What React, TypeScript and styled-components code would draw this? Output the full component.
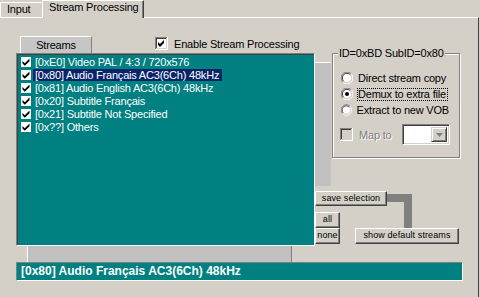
import React from 'react';
import styled, { createGlobalStyle } from 'styled-components';

const GlobalStyle = createGlobalStyle`
  html, body {
    margin: 0;
    padding: 0;
    background: #d4d0c8;
  }
  body {
    font-family: "Liberation Sans", Arial, sans-serif;
    font-size: 11px;
    letter-spacing: -0.2px;
    color: #000;
    width: 480px;
    height: 297px;
    overflow: hidden;
  }
`;

const Window = styled.div`
  width: 480px;
  height: 297px;
  background: #d4d0c8;
`;

const TabStrip = styled.div`
  display: flex;
  align-items: flex-end;
  height: 17px;
`;

const Tab = styled.div<{ $active?: boolean }>`
  box-sizing: border-box;
  position: relative;
  z-index: ${p => (p.$active ? 1 : 0)};
  height: ${p => (p.$active ? '18px' : '15px')};
  margin-bottom: ${p => (p.$active ? '-1px' : '0')};
  padding: 0 0 0 6px;
  line-height: 13px;
  background: #d4d0c8;
  border-top: 1px solid #fff;
  border-left: 1px solid #fff;
  border-right: ${p => (p.$active ? '1px solid #404040' : 'none')};
  box-shadow: ${p => (p.$active ? 'inset -1px 0 0 #808080' : 'none')};
  width: ${p => (p.$active ? '102px' : '42px')};
`;

const Panel = styled.div`
  box-sizing: border-box;
  width: 479px;
  height: 280px;
  border-top: 1px solid #fff;
  border-right: 1px solid #404040;
  padding: 18px 0 0 16px;
`;

const TopArea = styled.div`
  display: flex;
  align-items: flex-start;
`;

const LeftCol = styled.div`
  display: flex;
  flex-direction: column;
  width: 299px;
`;

const HeaderRow = styled.div`
  display: flex;
  align-items: flex-start;
  height: 17px;
`;

const StreamsHeader = styled.div`
  box-sizing: border-box;
  margin-left: 4px;
  width: 72px;
  height: 17px;
  background: #c6c6c6;
  border-top: 1px solid #fff;
  border-left: 1px solid #fff;
  border-right: 1px solid #808080;
  text-align: center;
  line-height: 16px;
`;

const CheckLabel = styled.label<{ $disabled?: boolean }>`
  display: flex;
  align-items: center;
  gap: 6px;
  color: ${p => (p.$disabled ? '#808080' : '#000')};
  text-shadow: ${p => (p.$disabled ? '1px 1px 0 #fff' : 'none')};
`;

const EnableWrap = styled.div`
  margin: 1px 0 0 63px;
`;

const StreamList = styled.div`
  box-sizing: border-box;
  height: 193px;
  background: #008080;
  border: 1px solid;
  border-color: #808080 #fff #fff #808080;
  box-shadow: inset 1px 1px 0 #404040;
  padding: 1px 0 0 4px;
`;

const Row = styled.div`
  display: flex;
  align-items: center;
  height: 13px;
`;

const RowText = styled.span<{ $selected?: boolean }>`
  margin-left: 2px;
  padding: 0 3px 0 2px;
  height: 12px;
  line-height: 12px;
  color: #fff;
  background: ${p => (p.$selected ? '#0a246a' : 'transparent')};
  white-space: nowrap;
`;

const RightCol = styled.div`
  display: flex;
  flex-direction: column;
`;

const RightTop = styled.div`
  display: flex;
  align-items: flex-start;
  height: 155px;
`;

const GrayStrip = styled.div`
  box-sizing: border-box;
  margin-top: 26px;
  width: 16px;
  height: 124px;
  background: #c0c0c0;
  border-top: 1px solid #fff;
`;

const GroupBox = styled.div`
  box-sizing: border-box;
  position: relative;
  margin: 17px 0 0 1px;
  width: 128px;
  height: 105px;
  border: 1px solid #808080;
  box-shadow: 1px 1px 0 #fff, inset 1px 1px 0 #fff;
  padding: 16px 9px 0 8px;
`;

const Legend = styled.span`
  position: absolute;
  top: -7px;
  left: 5px;
  padding: 0 1px;
  background: #d4d0c8;
  line-height: 13px;
`;

const RadioRow = styled.div`
  display: flex;
  align-items: center;
  height: 16px;
`;

const RadioText = styled.span<{ $focused?: boolean }>`
  margin-left: ${p => (p.$focused ? '4px' : '5px')};
  padding: 0 1px 0 0;
  line-height: 11px;
  border: ${p => (p.$focused ? '1px dotted #000' : 'none')};
  white-space: nowrap;
`;

const MapRow = styled.div`
  display: flex;
  align-items: center;
  height: 21px;
  margin: 6px 0 0 -1px;
`;

const Combo = styled.div`
  box-sizing: border-box;
  margin-left: auto;
  width: 48px;
  height: 21px;
  display: flex;
  justify-content: flex-end;
  background: #fff;
  border: 1px solid;
  border-color: #808080 #fff #fff #808080;
  box-shadow: inset 1px 1px 0 #404040, inset -1px -1px 0 #d4d0c8;
  padding: 2px;
`;

const ComboButton = styled.div`
  box-sizing: border-box;
  width: 16px;
  height: 15px;
  background: #d4d0c8;
  border: 1px solid;
  border-color: #d4d0c8 #404040 #404040 #d4d0c8;
  box-shadow: inset 1px 1px 0 #fff, inset -1px -1px 0 #808080;
  display: flex;
  align-items: center;
  justify-content: center;
`;

const ButtonGrid = styled.div`
  display: grid;
  grid-template-columns: 25px 15px 32px 17px 8px 47px;
  grid-template-rows: 3px 8px 4px 6px 16px 16px;
`;

const WinButton = styled.div<{ $col: string; $row: string }>`
  box-sizing: border-box;
  grid-column: ${p => p.$col};
  grid-row: ${p => p.$row};
  background: #d4d0c8;
  border: 1px solid;
  border-color: #fff #404040 #404040 #fff;
  box-shadow: inset -1px -1px 0 #808080;
  font-size: 9px;
  letter-spacing: 0.1px;
  text-align: center;
  line-height: 13px;
  white-space: nowrap;
  overflow: hidden;
`;

const Connector = styled.div`
  grid-column: 4 / 6;
  grid-row: 2 / 6;
  border-top: 8px solid #808080;
  border-right: 8px solid #808080;
`;

const UnderBar = styled.div`
  box-sizing: border-box;
  margin-left: 11px;
  width: 265px;
  height: 16px;
  background: #c0c0c0;
  border-left: 1px solid #fff;
  border-right: 1px solid #808080;
`;

const StatusBar = styled.div`
  box-sizing: border-box;
  width: 447px;
  height: 19px;
  background: #008080;
  border: 1px solid;
  border-color: #808080 #fff #fff #808080;
  padding-left: 4px;
  color: #fff;
  font-weight: bold;
  font-size: 12px;
  letter-spacing: 0;
  line-height: 17px;
`;

const SmallCheck = () => (
  <svg width="10" height="10" viewBox="0 0 10 10">
    <rect width="10" height="10" fill="#fff" />
    <polygon points="1.5,4 3.8,6.2 8.5,1.6 8.5,4.3 3.8,8.8 1.5,6.5" fill="#000" />
  </svg>
);

const Check = ({ checked, disabled }: { checked?: boolean; disabled?: boolean }) => (
  <svg width="13" height="13" viewBox="0 0 13 13">
    <rect x="0" y="0" width="13" height="13" fill="#fff" />
    <rect x="0" y="0" width="12" height="12" fill="#808080" />
    <rect x="1" y="1" width="11" height="11" fill="#d4d0c8" />
    <rect x="1" y="1" width="10" height="10" fill="#404040" />
    <rect x="2" y="2" width="9" height="9" fill={disabled ? '#d4d0c8' : '#fff'} />
    {checked && <polygon points="3,5 5,7 9,3 9,6 5,10 3,8" fill="#000" />}
  </svg>
);

const Radio = ({ checked }: { checked?: boolean }) => (
  <svg width="12" height="12" viewBox="0 0 12 12">
    <path d="M10.2 1.8 A5.9 5.9 0 0 0 1.8 10.2" stroke="#808080" fill="none" />
    <path d="M1.8 10.2 A5.9 5.9 0 0 0 10.2 1.8" stroke="#fff" fill="none" />
    <circle cx="6" cy="6" r="4.6" fill="#fff" />
    <path d="M9.3 2.7 A4.6 4.6 0 0 0 2.7 9.3" stroke="#404040" fill="none" />
    <path d="M2.7 9.3 A4.6 4.6 0 0 0 9.3 2.7" stroke="#d4d0c8" fill="none" />
    {checked && <circle cx="6" cy="6" r="2" fill="#000" />}
  </svg>
);

const streams = [
  { id: '0xE0', label: 'Video PAL / 4:3 / 720x576' },
  { id: '0x80', label: 'Audio Français AC3(6Ch) 48kHz', selected: true },
  { id: '0x81', label: 'Audio English AC3(6Ch) 48kHz' },
  { id: '0x20', label: 'Subtitle Français' },
  { id: '0x21', label: 'Subtitle Not Specified' },
  { id: '0x??', label: 'Others' },
];

const modes = [
  { label: 'Direct stream copy' },
  { label: 'Demux to extra file', checked: true },
  { label: 'Extract to new VOB' },
];

export default function App() {
  return (
    <Window>
      <GlobalStyle />
      <TabStrip>
        <Tab>Input</Tab>
        <Tab $active>Stream Processing</Tab>
      </TabStrip>
      <Panel>
        <TopArea>
          <LeftCol>
            <HeaderRow>
              <StreamsHeader>Streams</StreamsHeader>
              <EnableWrap>
                <CheckLabel>
                  <Check checked />
                  Enable Stream Processing
                </CheckLabel>
              </EnableWrap>
            </HeaderRow>
            <StreamList>
              {streams.map(s => (
                <Row key={s.id}>
                  <SmallCheck />
                  <RowText $selected={s.selected}>
                    [{s.id}] {s.label}
                  </RowText>
                </Row>
              ))}
            </StreamList>
          </LeftCol>
          <RightCol>
            <RightTop>
              <GrayStrip />
              <GroupBox>
                <Legend>ID=0xBD SubID=0x80</Legend>
                {modes.map(m => (
                  <RadioRow key={m.label}>
                    <Radio checked={m.checked} />
                    <RadioText $focused={m.checked}>{m.label}</RadioText>
                  </RadioRow>
                ))}
                <MapRow>
                  <CheckLabel $disabled>
                    <Check disabled />
                    Map to
                  </CheckLabel>
                  <Combo>
                    <ComboButton>
                      <svg width="7" height="4" viewBox="0 0 7 4">
                        <polygon points="0,0 7,0 3.5,4" fill="#808080" />
                      </svg>
                    </ComboButton>
                  </Combo>
                </MapRow>
              </GroupBox>
            </RightTop>
            <ButtonGrid>
              <WinButton $col="1 / 4" $row="1 / 4">save selection</WinButton>
              <Connector />
              <WinButton $col="1 / 2" $row="5 / 6">all</WinButton>
              <WinButton $col="1 / 2" $row="6 / 7">none</WinButton>
              <WinButton $col="3 / 7" $row="6 / 7">show default streams</WinButton>
            </ButtonGrid>
          </RightCol>
        </TopArea>
        <UnderBar />
        <StatusBar>[0x80] Audio Français AC3(6Ch) 48kHz</StatusBar>
      </Panel>
    </Window>
  );
}
